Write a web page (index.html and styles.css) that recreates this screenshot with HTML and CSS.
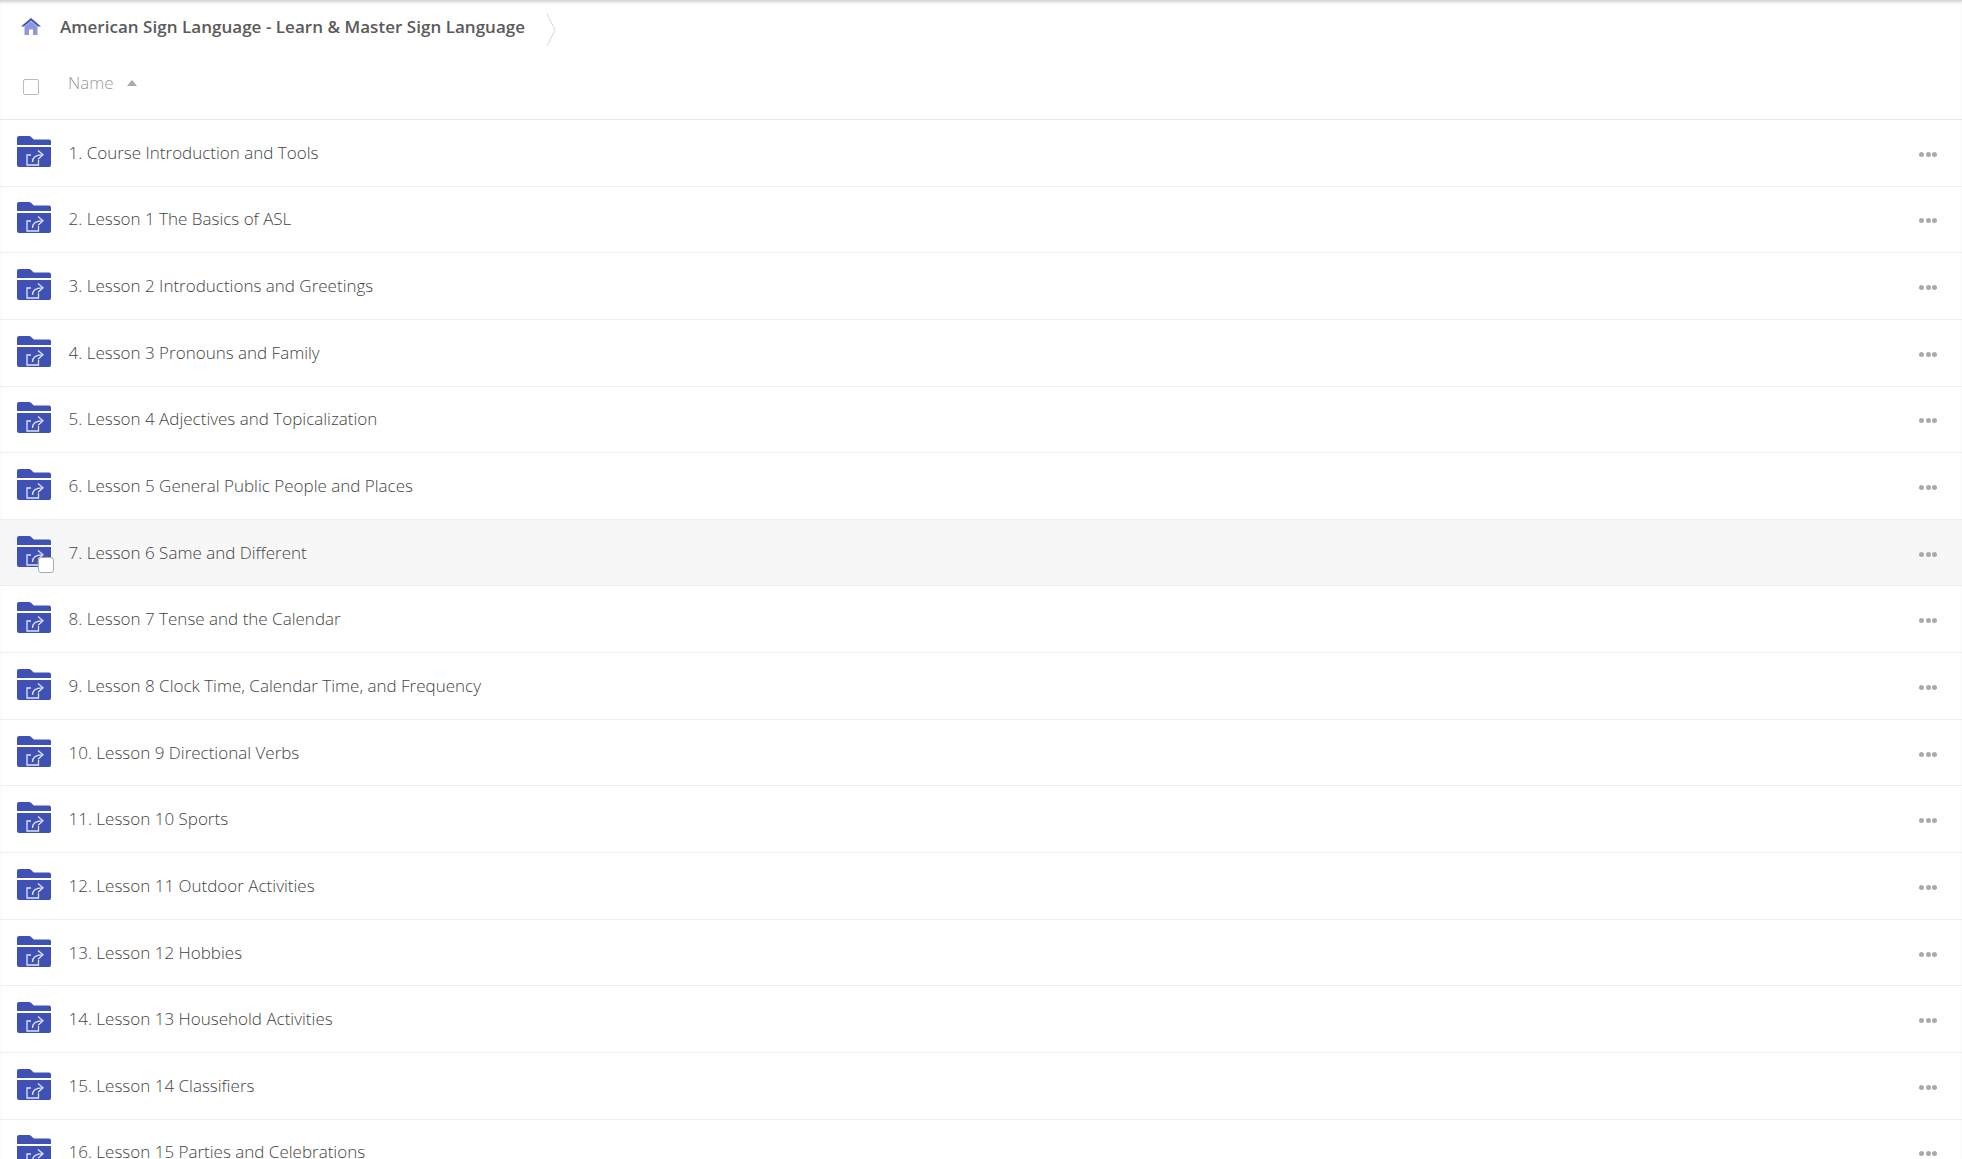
FILE: index.html
```html
<!DOCTYPE html>
<html>
<head>
<title>American Sign Language - Learn &amp; Master Sign Language</title>
<meta http-equiv="content-type" content="text/html; charset=UTF-8">
<link rel="stylesheet" href="styles.css">
</head>
<body>
<svg class="defs" width="0" height="0">
	<symbol id="shared-folder" viewBox="0 0 34 31">
		<path fill="#3f51b5" d="M0 9V2Q0 0 2 0H12Q13.300 0 14.200 .9L16.800 3.500H32Q34 3.500 34 5.500V9Z"/>
		<path fill="#3f51b5" d="M0 11H34V29Q34 31 32 31H2Q0 31 0 29Z"/>
		<path fill="none" stroke="#dfe2f3" stroke-width="1.300" d="M21.500 24V29H10V19H14"/>
		<path fill="none" stroke="#dfe2f3" stroke-width="1.300" d="M15.500 26C15.500 21 19 18.800 25 18.800"/>
		<path fill="none" stroke="#dfe2f3" stroke-width="1.300" d="M21 14.500L26 18.800L21 23.200"/>
	</symbol>
</svg>

<div class="breadcrumb">
	<svg class="home" viewBox="0 0 20 17">
		<path fill="#3f51b5" d="M10 0L20 8.500H17L10 2.800L3 8.500H0Z"/>
		<path fill="#8c97dc" d="M3.500 8.500L10 3.300L16.500 8.500V17H12V11.500H8V17H3.500Z"/>
	</svg>
	<span class="crumb-title">American Sign Language - Learn &amp; Master Sign Language</span>
	<svg class="crumb-arrow" viewBox="0 0 10 34">
		<path fill="none" stroke="#d9d9d9" d="M1 1L9 17L1 33"/>
	</svg>
</div>

<div class="list-head">
	<span class="check"></span>
	<span class="head-name">Name</span>
	<span class="sort-arrow"></span>
</div>

<div class="list">
	<div class="row"><svg class="folder"><use href="#shared-folder"/></svg><span class="name">1. Course Introduction and Tools</span><span class="more"><i></i><i></i><i></i></span></div>
	<div class="row"><svg class="folder"><use href="#shared-folder"/></svg><span class="name">2. Lesson 1 The Basics of ASL</span><span class="more"><i></i><i></i><i></i></span></div>
	<div class="row"><svg class="folder"><use href="#shared-folder"/></svg><span class="name">3. Lesson 2 Introductions and Greetings</span><span class="more"><i></i><i></i><i></i></span></div>
	<div class="row"><svg class="folder"><use href="#shared-folder"/></svg><span class="name">4. Lesson 3 Pronouns and Family</span><span class="more"><i></i><i></i><i></i></span></div>
	<div class="row"><svg class="folder"><use href="#shared-folder"/></svg><span class="name">5. Lesson 4 Adjectives and Topicalization</span><span class="more"><i></i><i></i><i></i></span></div>
	<div class="row"><svg class="folder"><use href="#shared-folder"/></svg><span class="name">6. Lesson 5 General Public People and Places</span><span class="more"><i></i><i></i><i></i></span></div>
	<div class="row hover"><svg class="folder"><use href="#shared-folder"/></svg><span class="check row-check"></span><span class="name">7. Lesson 6 Same and Different</span><span class="more"><i></i><i></i><i></i></span></div>
	<div class="row"><svg class="folder"><use href="#shared-folder"/></svg><span class="name">8. Lesson 7 Tense and the Calendar</span><span class="more"><i></i><i></i><i></i></span></div>
	<div class="row"><svg class="folder"><use href="#shared-folder"/></svg><span class="name">9. Lesson 8 Clock Time, Calendar Time, and Frequency</span><span class="more"><i></i><i></i><i></i></span></div>
	<div class="row"><svg class="folder"><use href="#shared-folder"/></svg><span class="name">10. Lesson 9 Directional Verbs</span><span class="more"><i></i><i></i><i></i></span></div>
	<div class="row"><svg class="folder"><use href="#shared-folder"/></svg><span class="name">11. Lesson 10 Sports</span><span class="more"><i></i><i></i><i></i></span></div>
	<div class="row"><svg class="folder"><use href="#shared-folder"/></svg><span class="name">12. Lesson 11 Outdoor Activities</span><span class="more"><i></i><i></i><i></i></span></div>
	<div class="row"><svg class="folder"><use href="#shared-folder"/></svg><span class="name">13. Lesson 12 Hobbies</span><span class="more"><i></i><i></i><i></i></span></div>
	<div class="row"><svg class="folder"><use href="#shared-folder"/></svg><span class="name">14. Lesson 13 Household Activities</span><span class="more"><i></i><i></i><i></i></span></div>
	<div class="row"><svg class="folder"><use href="#shared-folder"/></svg><span class="name">15. Lesson 14 Classifiers</span><span class="more"><i></i><i></i><i></i></span></div>
	<div class="row"><svg class="folder"><use href="#shared-folder"/></svg><span class="name">16. Lesson 15 Parties and Celebrations</span><span class="more"><i></i><i></i><i></i></span></div>
</div>
</body>
</html>
```

FILE: styles.css
```css
html, body	{ height:100%;overflow:hidden }
body		{ margin:0;padding:0;background:#fff;color:#555;font-family:"Open Sans",sans-serif;box-shadow:inset 0 4px 4px -3px #bbb }
.defs		{ display:block;height:0 }

.breadcrumb		{ display:flex;align-items:center;height:54px;padding-left:21px }
.home			{ width:20px;height:17px;margin-right:19px;margin-top:-1px }
.crumb-title	{ font-size:17px;font-weight:600;color:#5a5a5a;margin-top:-1px;letter-spacing:.03px }
.crumb-arrow	{ width:10px;height:34px;margin-left:21px;margin-top:5px }

.list-head		{ display:flex;height:66px;box-sizing:border-box;border-bottom:1px solid #e8e8e8;padding-left:23px }
.head-name		{ font-size:17px;font-weight:300;color:#999;margin:18px 0 0 29px;line-height:22px }
.sort-arrow		{ width:0;height:0;margin:26px 0 0 13px;border:5px solid transparent;border-top:0;border-bottom:6px solid #aaa }

.check			{ display:block;width:14px;height:14px;margin-top:25px;border:1.500px solid #bbb;border-radius:2px;background:#fff }

.row			{ position:relative;display:flex;align-items:center;height:66.650px;box-sizing:border-box;border-bottom:1px solid #eee;padding:0 25px 0 17px }
.row.hover		{ background:#f7f7f7 }
.folder			{ width:34px;height:31px;margin-top:-3px;flex:none }
.name			{ margin-left:17.500px;margin-top:-1px;font-size:17px;font-weight:300;color:#444 }
.more			{ display:flex;gap:1.500px;margin-left:auto;margin-top:3px }
.more i			{ display:block;width:5px;height:5px;border-radius:50%;background:#aaa }
.row-check		{ position:absolute;left:38px;top:37px;margin:0;border-color:#aaa;border-radius:3px }
```
